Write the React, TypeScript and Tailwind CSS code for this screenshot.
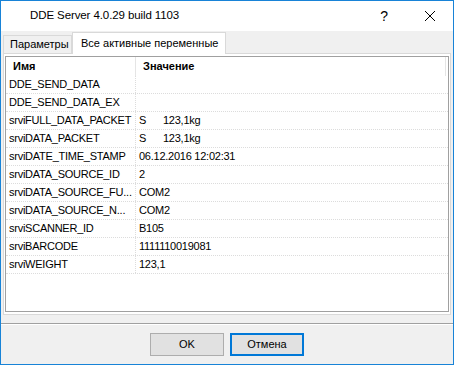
import React from "react";

const rows: [string, React.ReactNode][] = [
  ["DDE_SEND_DATA", ""],
  ["DDE_SEND_DATA_EX", ""],
  [
    "srviFULL_DATA_PACKET",
    <>
      <span className="inline-block w-[24px]">S</span>123,1kg
    </>,
  ],
  [
    "srviDATA_PACKET",
    <>
      <span className="inline-block w-[24px]">S</span>123,1kg
    </>,
  ],
  ["srviDATE_TIME_STAMP", "06.12.2016 12:02:31"],
  ["srviDATA_SOURCE_ID", "2"],
  ["srviDATA_SOURCE_FU...", "COM2"],
  ["srviDATA_SOURCE_N...", "COM2"],
  ["srviSCANNER_ID", "B105"],
  ["srviBARCODE", "1111110019081"],
  ["srviWEIGHT", "123,1"],
];

export default function App() {
  return (
    <div
      className="flex h-[365px] w-[454px] flex-col border border-[#1883d7] bg-[#f0f0f0] text-black"
      style={{ fontFamily: '"Liberation Sans", Arial, sans-serif' }}
    >
      {/* Title bar */}
      <div className="flex h-[30px] items-center bg-white">
        <span className="pl-[29px] text-[11.5px] tracking-[-0.1px]">DDE Server 4.0.29 build 1103</span>
        <span className="ml-auto mr-[36px] text-[14px]">?</span>
        <svg width="12" height="12" viewBox="0 0 12 12" className="mr-[17px]">
          <path d="M1 1 L11 11 M11 1 L1 11" stroke="#000" strokeWidth="1" />
        </svg>
      </div>

      {/* Tabs */}
      <div className="ml-[2px] mt-[1px] flex h-[21px] items-end text-[11px]">
        <div className="flex h-[18px] w-[69px] items-center border border-b-0 border-[#d9d9d9] bg-[#f0f0f0] pl-[6px]">
          Параметры
        </div>
        <div className="relative z-10 -mb-px flex h-[22px] w-[154px] items-center border border-b-0 border-[#d9d9d9] bg-white pl-[8px]">
          Все активные переменные
        </div>
      </div>

      {/* Panel */}
      <div className="ml-[2px] flex h-[262px] w-[448px] flex-col border border-[#d9d9d9] bg-white pb-[2px] pl-[1px] pt-[2px] pr-px">
        <div className="flex-1 border border-[#a0a0a0] bg-white text-[11px]">
          <div className="flex h-[19px] items-center font-bold">
            <div className="w-[130px] border-r border-[#e5e5e5] pl-[7px] leading-[19px]">Имя</div>
            <div className="w-[310px] border-r border-[#e5e5e5] pl-[7px] leading-[19px]">Значение</div>
          </div>
          {rows.map(([name, value]) => (
            <div
              key={name}
              className="flex h-[18px] items-center border-b border-dotted border-[#dcdcdc] tracking-[-0.25px]"
            >
              <div className="h-full w-[130px] border-r border-dotted border-[#dcdcdc] pl-[3px] leading-[17px] whitespace-nowrap">
                {name}
              </div>
              <div className="pl-[3px] leading-[17px] whitespace-nowrap">{value}</div>
            </div>
          ))}
        </div>
      </div>

      {/* Separator */}
      <div className="mt-[8px] h-px bg-[#a0a0a0]" />
      <div className="h-px bg-white" />

      {/* Buttons */}
      <div className="mt-[8px] flex justify-center gap-[6px] text-[11px]">
        <button className="h-[23px] w-[74px] border border-[#adadad] bg-[#e1e1e1]">OK</button>
        <button className="h-[23px] w-[74px] border-2 border-[#0078d7] bg-[#e1e1e1]">Отмена</button>
      </div>
    </div>
  );
}
